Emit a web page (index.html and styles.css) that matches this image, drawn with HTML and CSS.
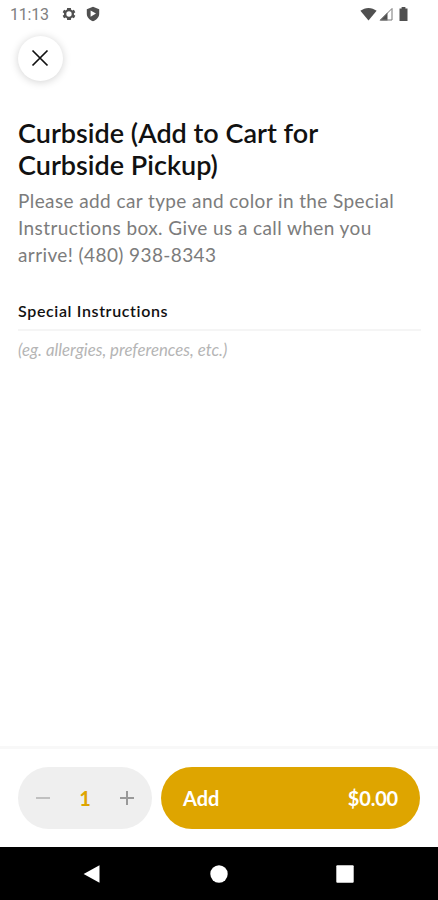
FILE: index.html
```html
<!DOCTYPE html>
<html lang="en">
<head>
  <meta charset="UTF-8">
  <meta name="viewport" content="width=device-width, initial-scale=1.0">
  <title>Curbside</title>
  <link rel="stylesheet" href="styles.css">
</head>
<body>
  <div id="root">
    <div class="status">
      <span class="time">11:13</span>
      <svg class="gear" width="16" height="16" viewBox="0 0 24 24"><path fill-rule="evenodd" d="M19.4 13a7.500 7.500 0 0 0 0-2l2.100-1.600-2.100-3.700-2.500 1a7.500 7.500 0 0 0-1.700-1L14.800 3H9.200l-.4 2.700a7.500 7.500 0 0 0-1.700 1l-2.500-1-2.100 3.700L4.600 11a7.500 7.500 0 0 0 0 2l-2.100 1.600 2.100 3.700 2.500-1a7.500 7.500 0 0 0 1.700 1l.4 2.700h5.600l.4-2.700a7.500 7.500 0 0 0 1.700-1l2.500 1 2.100-3.700zM12 16a4 4 0 1 1 0-8 4 4 0 0 1 0 8z"/></svg>
      <svg class="shield" width="14" height="16" viewBox="0 0 14 16"><path fill-rule="evenodd" d="M7 .8l6.200 2.400v4.600c0 3.400-2.600 6.200-6.200 7.400C3.400 14 .8 11.200.8 7.800V3.200zM4.600 4.400v6.400L10 7.600z"/></svg>
      <div class="signals">
        <svg width="17" height="14" viewBox="0 0 17 14"><path d="M8.500 13.500L.4 3.800C5-.1 12-.1 16.600 3.800z"/></svg>
        <svg width="14" height="14" viewBox="0 0 14 14"><path d="M.5 13.500L8.500 5.500v8z"/><path class="line" d="M1.500 13L13 1.500V13z"/></svg>
        <svg class="battery" width="9" height="14" viewBox="0 0 9 14"><path d="M2.600 0h3.800v1.500H8.500V14H.5V1.500h2.100z"/></svg>
      </div>
    </div>

    <button class="close" aria-label="Close">
      <svg width="18" height="18" viewBox="0 0 18 18"><path d="M1.500 1.500l15 15M16.500 1.500l-15 15"/></svg>
    </button>

    <div class="content">
      <h1>Curbside (Add to Cart for<br>Curbside Pickup)</h1>
      <p class="desc">Please add car type and color in the Special<br>Instructions box. Give us a call when you<br>arrive! (480) 938-8343</p>
      <h2>Special Instructions</h2>
      <div class="note">(eg. allergies, preferences, etc.)</div>
    </div>

    <div class="footer">
      <div class="quantity">
        <svg class="minus" width="14" height="14" viewBox="0 0 14 14"><path d="M0 7h14"/></svg>
        <span>1</span>
        <svg class="plus" width="14" height="14" viewBox="0 0 14 14"><path d="M0 7h14M7 0v14"/></svg>
      </div>
      <button class="add">
        <span>Add</span>
        <span class="price">$0.00</span>
      </button>
    </div>

    <div class="nav">
      <svg width="18" height="20" viewBox="0 0 18 20"><path d="M16.500 1.200v17.600L.6 10z"/></svg>
      <svg width="18" height="18" viewBox="0 0 18 18"><circle cx="9" cy="9" r="8.700"/></svg>
      <svg width="18" height="18" viewBox="0 0 18 18"><rect x=".3" y=".3" width="17.400" height="17.400" rx="1"/></svg>
    </div>
  </div>
</body>
</html>
```
FILE: styles.css
```css
*{
  margin: 0px;
  padding: 0px;
  box-sizing: border-box;
}
body{
  font-family: Lato, "Liberation Sans", sans-serif;
  background-color: #fff;
}
#root{
  width: 100%;
  height: 100vh;
  display: flex;
  flex-direction: column;
}
svg{
  display: block;
  flex: none;
}
button{
  border: none;
  font-family: inherit;
}
.status{
  height: 28px;
  padding: 0 30px 0 10px;
  display: flex;
  align-items: center;
  fill: #505050;
}
.time{
  width: 51px;
  font-family: Roboto, sans-serif;
  font-size: 16px;
  letter-spacing: -0.200px;
  color: #808080;
}
.shield{
  margin-left: 9px;
}
.signals{
  margin-left: auto;
  display: flex;
  gap: 2px;
}
.signals .line{
  fill: none;
  stroke: #777;
}
.battery{
  margin-left: 4px;
}
.close{
  width: 45px;
  height: 45px;
  margin: 8px 0 0 18px;
  padding: 0 1px 1px 0;
  border-radius: 50%;
  background-color: #fff;
  box-shadow: 0 1px 9px rgba(0,0,0,0.18);
  display: flex;
  align-items: center;
  justify-content: center;
}
.close path{
  stroke: #111;
  stroke-width: 1.700;
}
.content{
  flex: 1;
  padding: 36px 17px 0 18px;
}
h1{
  font-size: 27px;
  font-weight: 600;
  line-height: 32px;
  color: #111;
}
.desc{
  margin-top: 6px;
  font-size: 19px;
  line-height: 27px;
  letter-spacing: 0.400px;
  color: #7c7c7c;
}
h2{
  margin-top: 30px;
  padding-bottom: 5px;
  border-bottom: 2px solid #f5f5f5;
  font-size: 16px;
  font-weight: 600;
  line-height: 26px;
  letter-spacing: 0.640px;
  color: #111;
}
.note{
  margin-top: 7px;
  font-size: 16.800px;
  font-style: italic;
  line-height: 24px;
  color: #b5b5b5;
}
.footer{
  height: 101px;
  padding: 18px 18px 0;
  border-top: 3px solid #f8f8f8;
  display: flex;
  gap: 9px;
}
.quantity{
  width: 134px;
  height: 62px;
  padding: 0 18px;
  border-radius: 31px;
  background-color: #efefef;
  display: flex;
  align-items: center;
  justify-content: space-between;
  font-size: 20px;
  font-weight: 700;
  color: #dea500;
}
.quantity path{
  stroke: #999;
  stroke-width: 2;
}
.quantity .minus path{
  stroke: #c0c0c0;
}
.add{
  flex: 1;
  height: 62px;
  padding: 0 22px;
  border-radius: 31px;
  background-color: #dea500;
  display: flex;
  align-items: center;
  justify-content: space-between;
  font-size: 20px;
  font-weight: 700;
  color: #fff;
}
.price{
  letter-spacing: -0.200px;
}
.nav{
  height: 53px;
  padding: 0 84px 0 83px;
  background-color: #000;
  display: flex;
  align-items: center;
  justify-content: space-between;
  fill: #fff;
}
```
